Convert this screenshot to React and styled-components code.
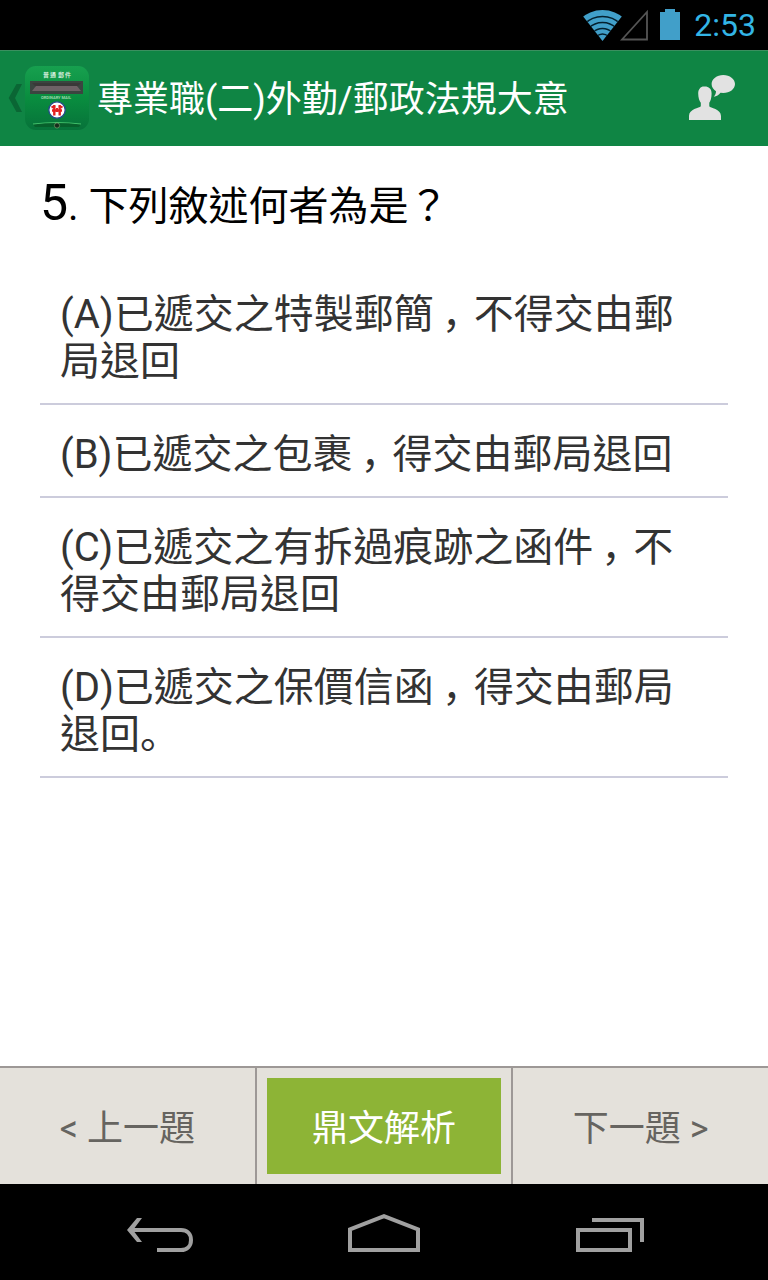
import React from 'react'
import styled, { createGlobalStyle } from 'styled-components';


const GlobalStyle = createGlobalStyle`
    *{box-sizing: border-box;}
    body{margin: 0; background: #fff; font-family: Roboto, "Noto Sans CJK TC", sans-serif;}
    button{border: 0; padding: 0; margin: 0; background: none; font: inherit; color: inherit; cursor: pointer;}
    svg{display: block;}
`;

const Screen = styled.div`
    min-height: 100vh; display: flex; flex-direction: column;
`;

const StatusBar = styled.div`
    height: 50px; padding: 0 12px; background: #000; display: flex; justify-content: flex-end; align-items: center; gap: 14px;
    color: #33b5e5; font-size: 32px; line-height: 50px;
`;

const ActionBar = styled.header`
    height: 96px; padding: 0 32px 0 8px; background: #0f8544; box-shadow: inset 0 1px 0 #3b8f5f; color: #fff;
    display: flex; align-items: center; justify-content: space-between;
`;

const UpButton = styled.button`
    display: flex; align-items: center; gap: 2px;
`;

const TitleGroup = styled.div`
    display: flex; align-items: center; gap: 8px;
`;

const Title = styled.h1`
    margin: 0; padding-top: 4px; font-size: 36px; line-height: 48px; font-weight: 400; white-space: nowrap;
`;

const Content = styled.main`
    flex: 1; padding: 31px 40px;
`;

const Question = styled.h2`
    margin: 0 0 29px; font-size: 40px; line-height: 59px; font-weight: 400; color: #000;
`;

const QuestionNumber = styled.span`
    font-size: 50px; line-height: 1;
`;

const OptionList = styled.ul`
    margin: 0; padding: 0; list-style: none;
`;

const Option = styled.li`
    border-bottom: 2px solid #ccccdc;
`;

const OptionButton = styled.button`
    display: block; width: 100%; padding: 26px 20px 18px; text-align: left; color: #333; font-size: 40px; line-height: 47px;
`;

// low punctuation, the comma centred in its cell
const Comma = styled.span`
    font-family: "Noto Sans CJK JP", sans-serif; font-feature-settings: "halt"; line-height: 1; padding: 0 12px 0 8px;
`;

const Stop = styled.span`
    font-family: "Noto Sans CJK JP", sans-serif; line-height: 1;
`;

const BottomBar = styled.nav`
    height: 118px; border-top: 2px solid #9d9896; background: #9d9896;
    display: grid; grid-template-columns: repeat(3, 1fr); gap: 2px;
`;

const BarCell = styled.div`
    background: #e4e1db; display: flex; padding: ${(p) => (p.$inset ? '10px' : '0')};
`;

const BarButton = styled.button`
    flex: 1; padding-top: 6px; font-size: 36px; line-height: 48px;
    color: ${(p) => (p.$primary ? '#fff' : '#666460')};
    background: ${(p) => (p.$primary ? '#8db436' : 'none')};
`;

const SystemNav = styled.div`
    height: 96px; padding: 0 48px; background: #000; display: grid; grid-template-columns: repeat(3, 1fr);

    button{display: flex; align-items: center; justify-content: center;}
`;

const options = [
  { id: 'A', text: '已遞交之特製郵簡，不得交由郵局退回' },
  { id: 'B', text: '已遞交之包裹，得交由郵局退回' },
  { id: 'C', text: '已遞交之有拆過痕跡之函件，不得交由郵局退回' },
  { id: 'D', text: '已遞交之保價信函，得交由郵局退回。' },
]

function renderText(text) {
  return text.split(/([，。])/).filter(Boolean).map((part, i) => {
    if (part === '，') return <Comma key={i} lang="ja">{part}</Comma>
    if (part === '。') return <Stop key={i} lang="ja">{part}</Stop>
    return part
  })
}

function StatusIcons() {
  return (
    <svg width="100" height="50" viewBox="0 0 100 50" aria-hidden="true">
      <clipPath id="fan"><path d="M22.5 41 L2 15 V0 H43 V15 Z" /></clipPath>
      <g clipPath="url(#fan)">
        <circle cx="22.5" cy="42" r="32" fill="#419fc9" />
        <g fill="none" stroke="#04202e" strokeWidth="1.4">
          <circle cx="22.5" cy="42" r="25.5" />
          <circle cx="22.5" cy="42" r="19.5" />
          <circle cx="22.5" cy="42" r="13.5" />
          <circle cx="22.5" cy="42" r="8" />
        </g>
      </g>
      <path d="M67 12 V39.5 H42 Z" fill="none" stroke="#555" strokeWidth="1.8" />
      <path d="M80 12 h5 v-3 h10 v3 h5 v28 h-20 z" fill="#419fc9" />
    </svg>
  )
}

function AppIcon() {
  return (
    <svg width="64" height="64" viewBox="0 0 64 64" aria-hidden="true">
      <defs>
        <linearGradient id="box" x1="0" y1="0" x2="0" y2="1">
          <stop offset="0" stopColor="#17a04f" />
          <stop offset="0.5" stopColor="#098d3f" />
          <stop offset="1" stopColor="#07723a" />
        </linearGradient>
      </defs>
      <rect width="64" height="64" rx="11" fill="url(#box)" />
      <text x="18 25 33 40" y="11" fontSize="6" fontWeight="500" fill="#e8f7ea" fontFamily="Noto Sans CJK TC, sans-serif">普通郵件</text>
      <path d="M5 15 H58 V28 H5 Z" fill="#3b4540" />
      <path d="M7 17 H56 L52 21 H11 Z" fill="#3a3838" />
      <path d="M11 20 H52 L56 25 H7 Z" fill="#6e6266" />
      <text x="16" y="33" fontSize="4" fontWeight="700" fill="#9ed7ae" fontFamily="Roboto, sans-serif">ORDINARY MAIL</text>
      <circle cx="32" cy="44" r="8.2" fill="#fff" stroke="#26488c" strokeWidth="1.3" />
      <g stroke="#e32222" fill="none">
        <path d="M26.5 41.5 L30 40 M37.5 41.5 L34 40 M27 44.5 H37" strokeWidth="2.4" />
        <path d="M29.3 39 V49.5 M34.7 39 V49.5" strokeWidth="2.4" />
        <path d="M32 42 V46" strokeWidth="2" />
      </g>
      <path d="M8 58 Q32 55 56 58 L54 61 H10 Z" fill="#07602c" />
      <path d="M8 58 Q32 55 56 58" fill="none" stroke="#43c36c" strokeWidth="1.2" />
      <circle cx="32" cy="59.5" r="2.6" fill="#172c1c" stroke="#76a46b" strokeWidth="0.7" />
    </svg>
  )
}

function App() {
  return (
    <>
      <GlobalStyle />
      <Screen lang="zh-Hant">
        <StatusBar>
          <StatusIcons />
          <time>2:53</time>
        </StatusBar>

        <ActionBar>
          <TitleGroup>
            <UpButton aria-label="返回">
              <svg width="15" height="32" viewBox="0 0 15 32" aria-hidden="true">
                <path d="M8.5 2 H14 L7 16 L14 30 H8.5 L0.7 16 Z" fill="#0a6634" />
              </svg>
              <AppIcon />
            </UpButton>
            <Title>專業職(二)外勤/郵政法規大意</Title>
          </TitleGroup>
          <button aria-label="討論">
            <svg width="48" height="48" viewBox="0 0 48 48" fill="#e2e2e2" aria-hidden="true">
              <path d="M17 12.5 C20.5 12.5 23.6 14.5 23.6 19.5 C23.6 24 22.5 27 21.3 28.8 V32.2 C22 34.3 33 34.5 33 42 V46 H1 V42 C1 34.5 11.5 34.3 12.8 32.2 V28.8 C11.5 27 10.2 24 10.2 19.5 C10.2 14.5 13.2 11.8 17 12.5 Z" />
              <path d="M35.3 1 C41.8 1 47 5 47 10 C47 15 41.8 19 35.3 19 L32.5 18.8 C30.8 21 28.5 22.6 25.8 22.8 C27.2 21.2 28 19.4 28 17.2 C25.3 15.5 23.6 13 23.6 10 C23.6 5 28.8 1 35.3 1 Z" />
            </svg>
          </button>
        </ActionBar>

        <Content>
          <Question><QuestionNumber>5</QuestionNumber>. 下列敘述何者為是？</Question>
          <OptionList>
            {options.map((o) => (
              <Option key={o.id}>
                <OptionButton>{renderText(`(${o.id})${o.text}`)}</OptionButton>
              </Option>
            ))}
          </OptionList>
        </Content>

        <BottomBar>
          <BarCell><BarButton>&lt; 上一題</BarButton></BarCell>
          <BarCell $inset><BarButton $primary>鼎文解析</BarButton></BarCell>
          <BarCell><BarButton>下一題 &gt;</BarButton></BarCell>
        </BottomBar>

        <SystemNav>
          <button aria-label="Back">
            <svg width="80" height="48" viewBox="0 0 80 48" fill="none" stroke="#a0a0a0" strokeWidth="4" aria-hidden="true">
              <path d="M11 22 H61 C67 22 71 26 71 32 C71 38 67 42 61 42 H37" />
              <path d="M7 22 L17 10 H22 L13 22 L22 34 H17 Z" fill="#a0a0a0" stroke="none" />
            </svg>
          </button>
          <button aria-label="Home">
            <svg width="80" height="48" viewBox="0 0 80 48" fill="none" stroke="#a0a0a0" strokeWidth="4" aria-hidden="true">
              <path d="M6 42 V21.4 L40 8.2 L74 21.4 V42 Z" />
            </svg>
          </button>
          <button aria-label="Recent apps">
            <svg width="80" height="48" viewBox="0 0 80 48" fill="none" stroke="#a0a0a0" strokeWidth="4" aria-hidden="true">
              <path d="M10 22 H62 V42 H10 Z" />
              <path d="M24 12 H74 V34" />
            </svg>
          </button>
        </SystemNav>
      </Screen>
    </>
  )
}

export default App;
